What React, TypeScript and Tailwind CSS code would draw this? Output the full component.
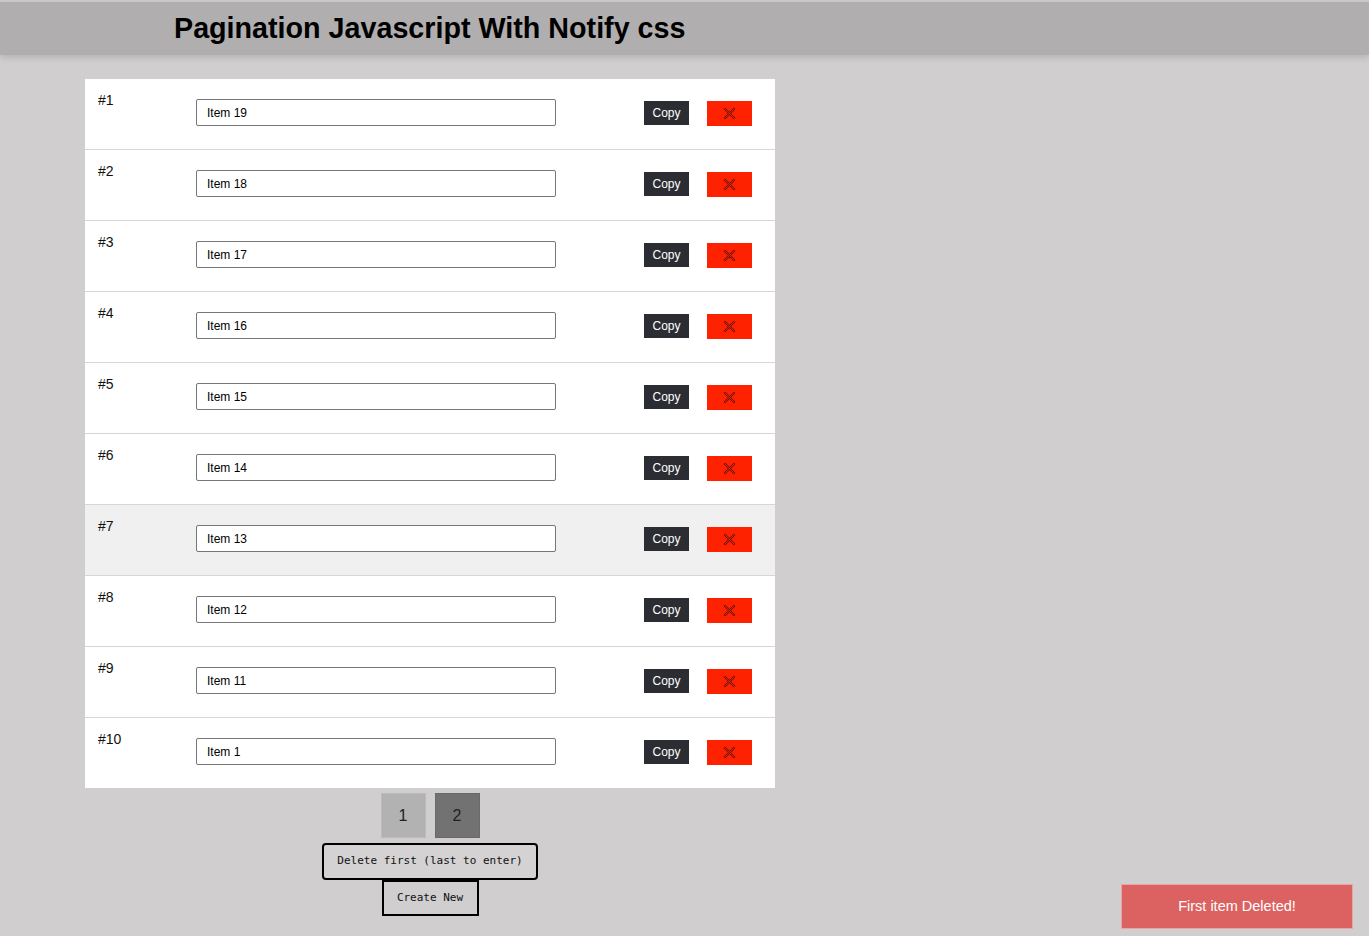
import React from 'react';

const items = ['Item 19', 'Item 18', 'Item 17', 'Item 16', 'Item 15', 'Item 14', 'Item 13', 'Item 12', 'Item 11', 'Item 1'];

const mono = { fontFamily: '"DejaVu Sans Mono", "Liberation Mono", monospace' };

const CrossIcon = () => (
  <svg width="13" height="13" viewBox="0 0 13 13" fill="none">
    <path d="M2 2 L11 11 M11 2 L2 11" stroke="#6a140c" strokeWidth="2.4" strokeLinecap="round" />
    <path d="M2 2 L11 11 M11 2 L2 11" stroke="#ff2200" strokeWidth="0.9" strokeLinecap="round" />
  </svg>
);

const Row: React.FC<{ index: number; value: string; hover?: boolean }> = ({ index, value, hover }) => (
  <div className={`flex items-start h-[71px] last:h-[70px] border-b border-[#d6d6d6] last:border-b-0 ${hover ? 'bg-[#f0f0f0]' : 'bg-white'}`}>
    <div className="w-[111px] pl-[13px] pt-[11px] text-[14px] text-[#111]">#{index}</div>
    <input
      readOnly
      value={value}
      className="mt-[20px] w-[360px] h-[27px] border border-[#767676] rounded-[2px] bg-white px-[10px] text-[12px] text-black outline-none"
    />
    <button className="mt-[22px] ml-[88px] w-[45px] h-[24px] bg-[#2c2d33] text-white text-[12px] flex items-center justify-center">
      Copy
    </button>
    <button className="mt-[22px] ml-[18px] w-[45px] h-[25px] bg-[#ff2200] flex items-center justify-center">
      <CrossIcon />
    </button>
  </div>
);

export default function App() {
  return (
    <div className="min-h-[936px] bg-[#d0cecf] relative overflow-hidden" style={{ fontFamily: '"Liberation Sans", Arial, sans-serif' }}>
      <header className="h-[55px] bg-[#b0aeae] border-t-2 border-[#c9c7c7] shadow-[0_3px_6px_rgba(0,0,0,0.12)] pl-[174px] flex items-center">
        <h1 className="text-[28.7px] font-bold text-black leading-none">Pagination Javascript With Notify css</h1>
      </header>

      <div className="ml-[85px] mt-[24px] w-[690px]">
        <div className="flex flex-col">
          {items.map((v, i) => (
            <Row key={i} index={i + 1} value={v} hover={i === 6} />
          ))}
        </div>

        <div className="flex flex-col items-center">
          <div className="flex gap-[9px] mt-[5px]">
            <button className="w-[45px] h-[45px] bg-[#b3b2b2] border border-[#bdbcbc] text-[16px] text-[#222]">1</button>
            <button className="w-[45px] h-[45px] bg-[#727272] border border-[#6a6a6a] text-[16px] text-[#222]">2</button>
          </div>
          <button
            className="mt-[5px] w-[216px] h-[37px] border-2 border-black rounded-[4px] bg-[#d4d2d3] text-[11px] text-[#111]"
            style={mono}
          >
            Delete first (last to enter)
          </button>
          <button
            className="w-[97px] h-[36px] border-2 border-black bg-[#d0cecf] text-[11px] text-[#111]"
            style={mono}
          >
            Create New
          </button>
        </div>
      </div>

      <div className="absolute left-[1121px] top-[884px] w-[232px] h-[45px] bg-[#dc6262] border border-[#e8a5a5] flex items-center justify-center text-white text-[14.5px]">
        First item Deleted!
      </div>
    </div>
  );
}
